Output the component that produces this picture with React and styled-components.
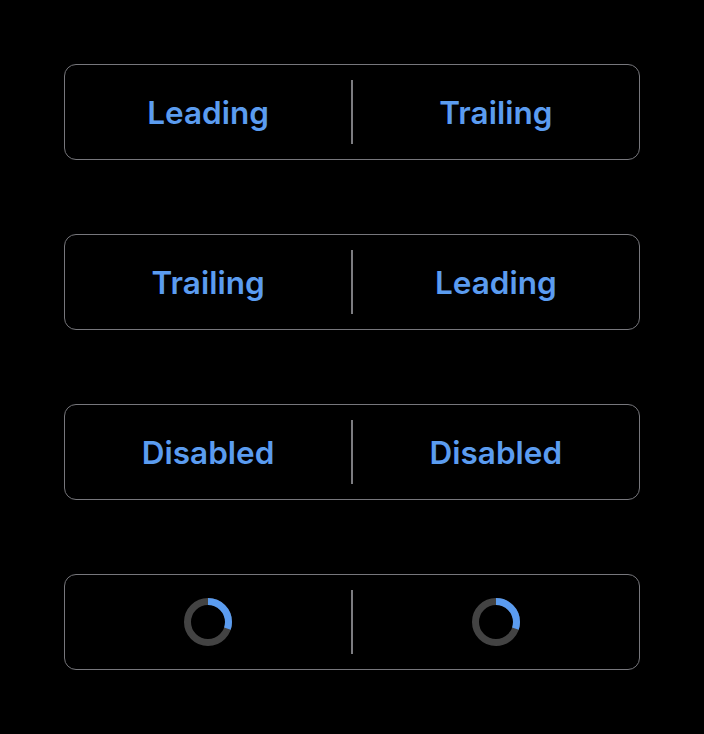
import React from 'react';
import styled, { createGlobalStyle } from 'styled-components';

const GlobalStyle = createGlobalStyle`
  html, body {
    margin: 0;
    background: #000;
  }
  body {
    font-family: Inter, "Noto Sans", sans-serif;
  }
`;

const Page = styled.div`
  display: flex;
  flex-direction: column;
  gap: 74px;
  padding: 64px;
  width: 704px;
  box-sizing: border-box;
`;

const Group = styled.div`
  display: flex;
  align-items: center;
  height: 96px;
  box-sizing: border-box;
  border: 1px solid #77777c;
  border-radius: 12px;
`;

const Segment = styled.button`
  flex: 1;
  display: flex;
  align-items: center;
  justify-content: center;
  height: 100%;
  background: none;
  border: none;
  padding: 0;
  font-family: inherit;
  font-size: 31.5px;
  font-weight: 600;
  color: #5b9cf0;
  cursor: pointer;
  &:disabled {
    cursor: default;
  }
`;

const Divider = styled.div`
  width: 1.5px;
  height: 64px;
  background: #7c7c80;
`;

const Spinner = ({ size = 50 }) => {
  const r = 20.5;
  const c = 2 * Math.PI * r;
  const arc = c * 0.3;
  return (
    <svg width={size} height={size} viewBox="0 0 50 50">
      <circle cx="25" cy="25" r={r} fill="none" stroke="#434343" strokeWidth="7" />
      <circle
        cx="25"
        cy="25"
        r={r}
        fill="none"
        stroke="#5b9cf0"
        strokeWidth="7"
        strokeDasharray={`${arc} ${c}`}
        transform="rotate(-90 25 25)"
      />
    </svg>
  );
};

const rows = [
  ['Leading', 'Trailing'],
  ['Trailing', 'Leading'],
  ['Disabled', 'Disabled'],
];

export default function App() {
  return (
    <>
      <GlobalStyle />
      <Page>
        {rows.map(([a, b], i) => (
          <Group key={i}>
            <Segment disabled={a === 'Disabled'}>{a}</Segment>
            <Divider />
            <Segment disabled={b === 'Disabled'}>{b}</Segment>
          </Group>
        ))}
        <Group>
          <Segment aria-label="Loading">
            <Spinner />
          </Segment>
          <Divider />
          <Segment aria-label="Loading">
            <Spinner />
          </Segment>
        </Group>
      </Page>
    </>
  );
}
